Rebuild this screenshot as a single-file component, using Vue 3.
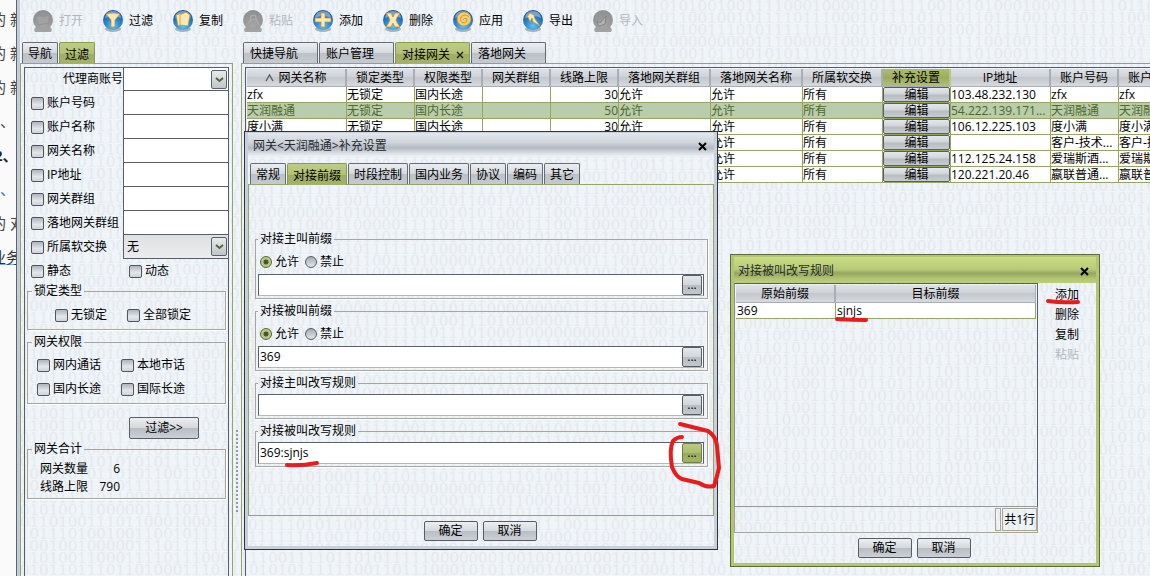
<script setup>
import { ref } from 'vue'

function makeBits(seed, rows, cols) {
  let s = seed
  const lines = []
  for (let r = 0; r < rows; r++) {
    let line = ''
    for (let c = 0; c < cols; c++) {
      s = (s * 16807) % 2147483647
      line += s / 2147483647 > 0.46 ? '1' : '0'
    }
    lines.push(line)
  }
  return lines.join('\n')
}
const mainBits = makeBits(7717, 60, 160)
const dialogBits = makeBits(91331, 40, 70)
const rulesBits = makeBits(45191, 30, 60)

const tools = [
  { id: 'open', label: '打开', off: true },
  { id: 'filter', label: '过滤' },
  { id: 'copy', label: '复制' },
  { id: 'paste', label: '粘贴', off: true },
  { id: 'add', label: '添加' },
  { id: 'del', label: '删除' },
  { id: 'apply', label: '应用' },
  { id: 'export', label: '导出' },
  { id: 'import', label: '导入', off: true }
]

const filters = ['账户号码', '账户名称', '网关名称', 'IP地址', '网关群组', '落地网关群组']

const mainTabs = ['快捷导航', '账户管理', '对接网关', '落地网关']
const dialogTabs = ['常规', '对接前缀', '时段控制', '国内业务', '协议', '编码', '其它']

const headers = ['网关名称', '锁定类型', '权限类型', '网关群组', '线路上限', '落地网关群组', '落地网关名称', '所属软交换', '补充设置', 'IP地址', '账户号码', '账户名称']
const rows = [
  { name: 'zfx', limit: 30, ip: '103.48.232.130', acc: 'zfx' },
  { name: '天润融通', limit: 50, ip: '54.222.139.171...', acc: '天润融通', picked: true },
  { name: '度小满', limit: 30, ip: '106.12.225.103', acc: '度小满' },
  { name: '', ip: '', acc: '客户-技术...' },
  { name: '', ip: '112.125.24.158', acc: '爱瑞斯酒...' },
  { name: '', ip: '120.221.20.46', acc: '嬴联普通...' }
]

const groups = ref([
  { title: '对接主叫前缀', mode: 'allow', radio: true, value: '' },
  { title: '对接被叫前缀', mode: 'allow', radio: true, value: '369' },
  { title: '对接主叫改写规则', value: '' },
  { title: '对接被叫改写规则', value: '369:sjnjs', hot: true }
])
</script>

<template>
  <div class="desktop">
    <div class="doc">
      <p>的 新</p>
      <p>的 新</p>
      <p>的 新</p>
      <p class="dot">、</p>
      <p class="num">2、</p>
      <p class="dot blue">、</p>
      <p>的 对</p>
      <p><a href="#">业务</a></p>
    </div>

    <div class="app">
      <div class="bits" :data-bits="mainBits" aria-hidden="true"></div>

      <div class="toolbar">
        <button v-for="t in tools" :key="t.id" class="tool" :class="{ off: t.off }" :disabled="t.off">
          <svg width="22" height="24" viewBox="0 0 22 24" aria-hidden="true">
            <defs>
              <radialGradient :id="'orb-' + t.id" cx="50%" cy="80%" r="80%">
                <stop offset="0" :stop-color="t.off ? '#a6a6a6' : '#5fc4f5'" />
                <stop offset="0.5" :stop-color="t.off ? '#999' : '#2b83cc'" />
                <stop offset="1" :stop-color="t.off ? '#8f8f8f' : '#174f8f'" />
              </radialGradient>
            </defs>
            <template v-if="t.off">
              <path d="M3 23 Q1 20 4 18 H18 Q21 20 19 23 Z" fill="#a3a3a3" />
              <circle cx="11" cy="11" r="10" :fill="`url(#orb-${t.id})`" />
              <path v-if="t.id === 'open'" d="M4 9 Q5 6 9 7 L11 8 L17 6 L17 14 L6 16 Z" fill="#a2a2a2" stroke="#939393" />
              <path v-else-if="t.id === 'paste'" d="M5 16 L8 12 L9 7 L13 6 L15 12 L17 16 M8 12 L12 10 L15 12" fill="none" stroke="#b0b0b0" />
              <path v-else d="M6 16 L5 12 L8 14 L14 7 L13 15 L8 17 Z" fill="#b4b4b4" stroke="#858585" />
            </template>
            <template v-else>
              <ellipse cx="11" cy="20" rx="8" ry="3" fill="#7b858f" opacity="0.6" />
              <circle cx="11" cy="11" r="10" :fill="`url(#orb-${t.id})`" />
              <path d="M3 9 Q4 2 11 2 Q18 2 19 9 Q11 5 3 9 Z" fill="#b8d8f2" opacity="0.55" />
              <g fill="#fde9b0" stroke="#c38a2c" stroke-width="0.7">
                <path v-if="t.id === 'filter'" d="M4 5 Q11 3 18 5 L13 11 V18 H9 V11 Z" />
                <template v-else-if="t.id === 'copy'">
                  <path d="M4 6 L11 4 L13 15 L6 17 Z" />
                  <path d="M8 6 L14 3 L18 6 L16 17 L8 16 Z" />
                </template>
                <path v-else-if="t.id === 'add'" d="M9 4 H13 V9 H19 V13 H13 V18 H9 V13 H3 V9 H9 Z" />
                <path v-else-if="t.id === 'del'" d="M4 4 H9 L11 8 L13 4 H18 Q15 8 14 11 Q15 14 18 18 H13 L11 14 L9 18 H4 Q7 14 8 11 Q7 8 4 4 Z" />
                <template v-else-if="t.id === 'apply'">
                  <circle cx="12" cy="10" r="7" fill="#f7cf6c" />
                  <path d="M17 8 Q13 4 9 8 Q7 13 12 14 Q16 13 15 10 Q12 8 11 11" fill="none" stroke="#b98325" />
                </template>
                <path v-else d="M4 9 L8 4 L12 6 L13 10 L18 17 L11 13 L10 9 L8 13 L6 8 Z" />
              </g>
            </template>
          </svg>
          <span>{{ t.label }}</span>
        </button>
      </div>

      <div class="work">
        <aside class="side">
          <div class="tabs">
            <button class="tab">导航</button>
            <button class="tab on">过滤</button>
          </div>
          <div class="pane">
            <div class="inner">
              <div class="frow">
                <label class="agent" for="agent">代理商账号</label>
                <div class="drop white">
                  <select id="agent"><option></option></select>
                  <span class="arrow"><svg width="9" height="6" viewBox="0 0 9 6"><path d="M1 1 L4.500 4 L8 1" fill="none" stroke="#55682f" stroke-width="2" /></svg></span>
                </div>
              </div>
              <div v-for="(f, i) in filters" :key="f" class="frow">
                <label class="chk"><input type="checkbox" />{{ f }}</label>
                <input :id="'f' + i" type="text" class="txt" :aria-label="f" />
              </div>
              <div class="frow">
                <label class="chk"><input type="checkbox" />所属软交换</label>
                <div class="drop">
                  <select aria-label="所属软交换"><option>无</option></select>
                  <span class="arrow"><svg width="9" height="6" viewBox="0 0 9 6"><path d="M1 1 L4.500 4 L8 1" fill="none" stroke="#55682f" stroke-width="2" /></svg></span>
                </div>
              </div>
              <div class="frow">
                <label class="chk"><input type="checkbox" />静态</label>
                <label class="chk"><input type="checkbox" />动态</label>
              </div>
              <fieldset class="box lock">
                <legend>锁定类型</legend>
                <label class="chk"><input type="checkbox" />无锁定</label>
                <label class="chk"><input type="checkbox" />全部锁定</label>
              </fieldset>
              <fieldset class="box perm">
                <legend>网关权限</legend>
                <label class="chk"><input type="checkbox" />网内通话</label>
                <label class="chk"><input type="checkbox" />本地市话</label>
                <label class="chk"><input type="checkbox" />国内长途</label>
                <label class="chk"><input type="checkbox" />国际长途</label>
              </fieldset>
              <button class="btn wide">过滤&gt;&gt;</button>
              <fieldset class="box total">
                <legend>网关合计</legend>
                <div><span>网关数量</span><b>6</b></div>
                <div><span>线路上限</span><b>790</b></div>
              </fieldset>
            </div>
          </div>
        </aside>

        <div class="split"></div>

        <main class="main">
          <div class="tabs">
            <button v-for="t in mainTabs" :key="t" class="tab big" :class="{ on: t === '对接网关' }">
              {{ t }}<svg v-if="t === '对接网关'" width="8" height="8" viewBox="0 0 8 8"><path d="M1 1 L7 7 M7 1 L1 7" stroke="#1b1f10" stroke-width="1.400" /></svg>
            </button>
          </div>
          <div class="pane">
            <div class="inner">
              <table class="grid">
                <colgroup>
                  <col class="w100" /><col class="w68" /><col class="w68" /><col class="w68" /><col class="w68" />
                  <col class="w92" /><col class="w92" /><col class="w80" /><col class="w68" /><col class="w100" />
                  <col class="w68" /><col class="w68" />
                </colgroup>
                <thead>
                  <tr>
                    <th v-for="(h, i) in headers" :key="h" :class="{ hot: h === '补充设置' }">
                      <svg v-if="i === 0" width="9" height="8" viewBox="0 0 9 8"><path d="M1 7 L4.500 1 L8 7" fill="none" stroke="#555" stroke-width="1.300" /></svg>{{ h }}
                    </th>
                  </tr>
                </thead>
                <tbody>
                  <tr v-for="(r, i) in rows" :key="i" :class="{ picked: r.picked }">
                    <td>{{ r.name }}</td>
                    <td>{{ r.name ? '无锁定' : '' }}</td>
                    <td>{{ r.name ? '国内长途' : '' }}</td>
                    <td></td>
                    <td class="num">{{ r.limit }}</td>
                    <td>{{ r.name ? '允许' : '' }}</td>
                    <td>允许</td>
                    <td>所有</td>
                    <td class="edit"><button>编辑</button></td>
                    <td>{{ r.ip }}</td>
                    <td>{{ r.acc }}</td>
                    <td>{{ r.acc }}</td>
                  </tr>
                </tbody>
              </table>
            </div>
          </div>
        </main>
      </div>
    </div>

    <section class="dialog settings" aria-label="补充设置">
      <div class="bits" :data-bits="dialogBits" aria-hidden="true"></div>
      <header class="title">
        <span>网关&lt;天润融通&gt;补充设置</span>
        <button class="close" aria-label="关闭"><svg width="9" height="9" viewBox="0 0 9 9"><path d="M1 1 L8 8 M8 1 L1 8" stroke="#000" stroke-width="2" /></svg></button>
      </header>
      <div class="tabs">
        <button v-for="t in dialogTabs" :key="t" class="tab" :class="{ on: t === '对接前缀' }">{{ t }}</button>
      </div>
      <div class="panel">
        <fieldset v-for="(g, i) in groups" :key="g.title" class="box rule">
          <legend>{{ g.title }}</legend>
          <div v-if="g.radio" class="radios">
            <label><input v-model="g.mode" type="radio" :name="'mode' + i" value="allow" />允许</label>
            <label><input v-model="g.mode" type="radio" :name="'mode' + i" value="deny" />禁止</label>
          </div>
          <div class="entry">
            <input v-model="g.value" type="text" :aria-label="g.title" />
            <button :class="{ hot: g.hot }">...</button>
          </div>
        </fieldset>
      </div>
      <footer class="actions">
        <button class="btn">确定</button>
        <button class="btn">取消</button>
      </footer>
      <svg class="ink" width="480" height="420" viewBox="0 0 480 420" aria-hidden="true">
        <path d="M42 333 Q56 334 72 331" />
        <path d="M435 292 L463 299 Q471 304 472 314 L474 336 Q472 345 469 354 Q462 356 454 351 L437 347 Q431 345 427 335 Q424 317 428 309 Q432 305 437 305" />
      </svg>
    </section>

    <section class="dialog rules" aria-label="对接被叫改写规则">
      <div class="bits" :data-bits="rulesBits" aria-hidden="true"></div>
      <header class="title">
        <span>对接被叫改写规则</span>
        <button class="close" aria-label="关闭"><svg width="9" height="9" viewBox="0 0 9 9"><path d="M1 1 L8 8 M8 1 L1 8" stroke="#000" stroke-width="2" /></svg></button>
      </header>
      <div class="content">
        <div class="left">
          <div class="list">
            <table class="grid">
              <colgroup><col class="w100" /><col /></colgroup>
              <thead><tr><th>原始前缀</th><th>目标前缀</th></tr></thead>
              <tbody><tr><td>369</td><td>sjnjs</td></tr></tbody>
            </table>
          </div>
          <div class="status"><span class="grow"></span><span class="gap"></span><span class="count">共1行</span></div>
        </div>
        <nav class="links">
          <button>添加</button>
          <button>删除</button>
          <button>复制</button>
          <button disabled>粘贴</button>
        </nav>
      </div>
      <footer class="actions">
        <button class="btn">确定</button>
        <button class="btn">取消</button>
      </footer>
      <svg class="ink" width="370" height="80" viewBox="0 0 370 80" aria-hidden="true">
        <path d="M106 64 Q122 65 135 65" />
        <path d="M317 46 Q330 48 347 47" />
      </svg>
    </section>
  </div>
</template>

<style>
html, body { overflow: hidden; }
</style>

<style scoped>
.desktop, .desktop * { box-sizing: border-box; }
.desktop {
  position: relative;
  display: flex;
  min-height: 100vh;
  overflow: hidden;
  font: 12px/16px "Open Sans", "Noto Sans CJK SC", sans-serif;
  color: #000;
}
button, input, select { font: inherit; color: inherit; margin: 0; padding: 0; border-radius: 0; }
button { cursor: pointer; white-space: nowrap; }

.doc {
  width: 16px;
  flex: none;
  overflow: hidden;
  background: #fafafa;
  font-size: 15px;
  line-height: 34px;
  color: #444;
  white-space: nowrap;
  padding-top: 2px;
}
.doc p { margin: 0 0 0 -9px; height: 34px; }
.doc .dot { margin-left: 0; }
.doc .num { margin-left: -6px; font-weight: bold; color: #223; }
.doc .blue { color: #2a6fb5; }
.doc a { color: #333; text-decoration-color: #6db3ea; }

.app {
  position: relative;
  flex: 1;
  min-width: 0;
  display: flex;
  flex-direction: column;
  border-left: 1px solid #5c6470;
  box-shadow: inset 3px 0 0 #c3ccd8;
  background: #eff4f9;
  overflow: hidden;
}
.bits {
  position: absolute;
  inset: 0 0 0 3px;
  overflow: hidden;
  font: 15px/12px "DejaVu Serif", serif;
  color: #e5e9ed;
  user-select: none;
  pointer-events: none;
}
.bits::before { content: attr(data-bits); white-space: pre; display: block; }
.toolbar { position: relative; display: flex; height: 42px; padding-left: 15px; }
.tool {
  width: 70px;
  display: flex;
  align-items: flex-start;
  gap: 5px;
  padding-top: 9px;
  border: 0;
  background: none;
}
.tool span { line-height: 24px; }
.tool.off { color: #b4b8bc; }

.work { position: relative; flex: 1; display: flex; min-height: 0; }
.side { width: 213px; margin-left: 3px; flex: none; display: flex; flex-direction: column; }
.split {
  width: 2px;
  height: 84px;
  margin: 388px 3px 0;
  flex: none;
  background: repeating-linear-gradient(#8f98a3 0 2px, transparent 2px 4px);
}
.main { flex: 1; min-width: 0; display: flex; flex-direction: column; }

.tabs { display: flex; gap: 1px; padding-left: 2px; height: 21px; }
.tab {
  position: relative;
  height: 21px;
  padding: 2px 5px 0;
  border: 1px solid #666c76;
  border-bottom: 0;
  border-radius: 2px 2px 0 0;
  background: linear-gradient(#eceef1, #d4d8dd 50%, #bcc1c8 52%, #c6cad0);
  text-align: left;
}
.tab.on {
  height: 22px;
  border-color: #8b9a55;
  background: linear-gradient(#becd85, #b2c176 50%, #9fae63 52%, #a4b269);
  z-index: 1;
}
.tab.big { width: 75px; padding-left: 6px; }
.tab.big svg { margin-left: 6px; }

.pane { flex: 1; display: flex; border: 1px solid #95a46c; border-bottom: 0; padding: 3px 3px 0; min-width: 0; }
.main .pane { border-right: 0; padding-right: 0; }
.inner { flex: 1; min-width: 0; border: 1px solid #555d68; border-bottom: 0; overflow: hidden; }
.main .inner { padding: 1px; border-right: 0; }

.frow { display: flex; height: 24px; }
.frow:first-child { height: 23px; }
.frow > :first-child { width: 98px; flex: none; }
.agent { text-align: right; line-height: 22px; }
.chk { display: flex; align-items: center; gap: 3px; padding-left: 6px; white-space: nowrap; }
.chk input {
  appearance: none;
  width: 13px;
  height: 13px;
  flex: none;
  border: 1px solid #4e5660;
  border-radius: 2px;
  background: linear-gradient(#b0b5bc, #e4e6e9 60%, #cfd2d6);
}
.txt { flex: 1; min-width: 0; border: 1px solid #565e69; border-top-width: 0; border-right: 0; background: #fff; padding: 0 3px; }
.drop { position: relative; flex: 1; display: flex; border: 1px solid #565e69; border-top: 0; border-right: 0; background: linear-gradient(#dfe0e2, #ececee); }
.drop.white { background: #fff; }
.drop select { appearance: none; flex: 1; min-width: 0; border: 0; background: none; padding-left: 3px; }
.arrow {
  position: absolute;
  right: 1px;
  top: 2px;
  width: 16px;
  height: 19px;
  display: flex;
  align-items: center;
  justify-content: center;
  border: 1px solid #59616c;
  border-radius: 2px;
  background: linear-gradient(#e8eaec, #c0c5cb);
  pointer-events: none;
}

.box { margin: 0; padding: 0; border: 1px solid #aaa598; box-shadow: 1px 1px 0 #fff; min-width: 0; }
.box legend { margin-left: 4px; padding: 0 2px; line-height: 16px; }
.side .box { margin: 0 2px; display: flex; flex-wrap: wrap; }
.side .box .chk { height: 24px; }
.lock { height: 47px; padding-top: 4px; }
.lock .chk { padding-left: 27px; width: 99px; }
.lock .chk + .chk { padding-left: 0; width: auto; }
.side .perm { margin-top: 4px; height: 70px; padding-top: 3px; align-content: flex-start; }
.perm .chk { width: 84px; padding-left: 9px; }
.btn {
  width: 54px;
  height: 20px;
  border: 1px solid #565d67;
  border-radius: 2px;
  background: linear-gradient(#eceef0, #d6d9dd 48%, #b9bec5 52%, #ccd0d5);
}
.btn.wide { display: block; width: 70px; height: 22px; margin: 13px 0 0 104px; }
.side .total { margin-top: 2px; height: 58px; flex-direction: column; flex-wrap: nowrap; padding-top: 3px; }
.total div { display: flex; height: 18px; padding-left: 12px; line-height: 18px; }
.total b { width: 32px; font-weight: normal; text-align: right; }

.grid { width: 100%; table-layout: fixed; border-collapse: separate; border-spacing: 0; }
.main .grid { width: 940px; }
.w100 { width: 100px; }
.w92 { width: 92px; }
.w80 { width: 80px; }
.w68 { width: 68px; }
.grid th {
  height: 18px;
  padding: 0;
  font-weight: normal;
  line-height: 16px;
  white-space: nowrap;
  overflow: hidden;
  border-right: 2px solid #a9aeb6;
  border-bottom: 1px solid #a9aeb6;
  background: linear-gradient(#dfe1e5, #cfd2d7 45%, #c3c7cd 50%, #d6d9dd);
}
.grid th.hot { background: linear-gradient(#aebd72, #9cab5e 50%, #b0bf74); border-right-color: #b8c38f; }
.grid th svg { margin-right: 4px; }
.grid td {
  height: 16px;
  padding: 0 0 0 1px;
  line-height: 15px;
  white-space: nowrap;
  overflow: hidden;
  background: #fff;
  border-right: 1px solid #97a466;
  border-bottom: 1px solid #97a466;
}
.main .grid td { padding-left: 0; }
.grid .picked td { background: #b9ccab; color: #4d672c; }
.grid td.num { text-align: right; }
.edit button {
  display: block;
  width: 100%;
  height: 15px;
  line-height: 13px;
  border: 1px solid #555d67;
  border-radius: 2px;
  color: #000;
  background: linear-gradient(#e4e7ea, #d0d4d9 48%, #b6bcc4 52%, #c8ccd2);
}

.dialog { position: absolute; display: flex; flex-direction: column; background: #eff4f9; }
.dialog > * { position: relative; }
.dialog > .bits { position: absolute; inset: 3px; }
.settings {
  left: 244px;
  top: 131px;
  width: 474px;
  border: 1px solid #30343b;
  box-shadow: inset 0 0 0 3px #c8d0da;
  padding: 3px;
}
.title { display: flex; align-items: center; justify-content: space-between; height: 24px; padding: 2px 7px 0 5px; color: #252a31; }
.settings .title { margin: -2px 0 0; background: linear-gradient(#e2e7ed, #cfd4db 40%, #b4bac3 62%, #dbe0e6 85%, #eff4f9); }
.close { border: 0; background: none; display: flex; }
.settings > .tabs { margin-top: 6px; }
.settings .panel {
  border: 1px solid #95a46c;
  padding: 46px 5px 48px 6px;
  display: flex;
  flex-direction: column;
  gap: 4px;
}
.rule { padding: 0 3px 2px 2px; }
.rule legend { margin-left: 0; }
.radios { display: flex; gap: 6px; height: 27px; align-items: center; padding: 3px 0 0 2px; }
.radios label { display: flex; align-items: center; gap: 3px; }
.radios input {
  appearance: none;
  width: 12px;
  height: 12px;
  border: 1px solid #565d67;
  border-radius: 50%;
  background: linear-gradient(#a7acb4, #e2e5e9);
}
.radios input:checked { border-color: #5b6a38; background: radial-gradient(#47562a 0 2px, #b9c887 3px); }
.entry {
  display: flex;
  height: 22px;
  margin-top: 3px;
  background: #fff;
  border: 1px solid #59616b;
  border-bottom-color: #b4b8bd;
}
.radios + .entry { margin-top: 0; }
.entry input { flex: 1; min-width: 0; border: 0; background: none; padding-left: 1px; outline: 0; }
.entry button {
  width: 20px;
  height: 20px;
  margin-right: 1px;
  border: 1px solid #555c66;
  border-radius: 2px;
  background: linear-gradient(#e4e6ea, #d3d6da 48%, #b9bdc4 52%, #c3c7cc);
}
.entry button.hot { border-color: #6f7f42; background: linear-gradient(#b9ca7d, #aebe71 48%, #9bab5d 52%, #a3b265); }
.actions { display: flex; justify-content: center; gap: 5px; padding: 5px 2px 5px 0; }

.rules {
  left: 730px;
  top: 254px;
  width: 370px;
  border: 1px solid #5e6d35;
  box-shadow: inset 0 0 0 3px #b3c572;
  padding: 3px;
}
.rules .title { margin-top: -1px; height: 26px; padding: 2px 7px 0 4px; background: linear-gradient(#c9de84, #b9ca77 48%, #97a560 62%, #b4c673 85%, #bccd7c); }
.content { display: flex; }
.left { width: 304px; flex: none; }
.list { height: 224px; border: 1px solid #555d68; border-bottom-color: #999; border-left-color: #8c949f; padding: 1px; }
.list .grid th:last-child { border-right-width: 1px; }
.status { display: flex; height: 26px; border: 1px solid #aaa598; border-top: 0; padding: 1px 0; gap: 1px; }
.grow { flex: 1; }
.gap { width: 6px; border: 1px solid #aaa598; }
.count { border: 1px solid #aaa598; padding: 0 1px; line-height: 21px; }
.links { flex: 1; display: flex; flex-direction: column; align-items: center; padding-top: 2px; }
.links button { height: 20px; border: 0; background: none; line-height: 20px; }
.links button:disabled { color: #b3b7bb; }

.dialog > .ink { position: absolute; left: 0; top: 0; overflow: visible; pointer-events: none; }
.ink path { fill: none; stroke: #e81c1c; stroke-width: 4; stroke-linecap: round; stroke-linejoin: round; }
</style>
